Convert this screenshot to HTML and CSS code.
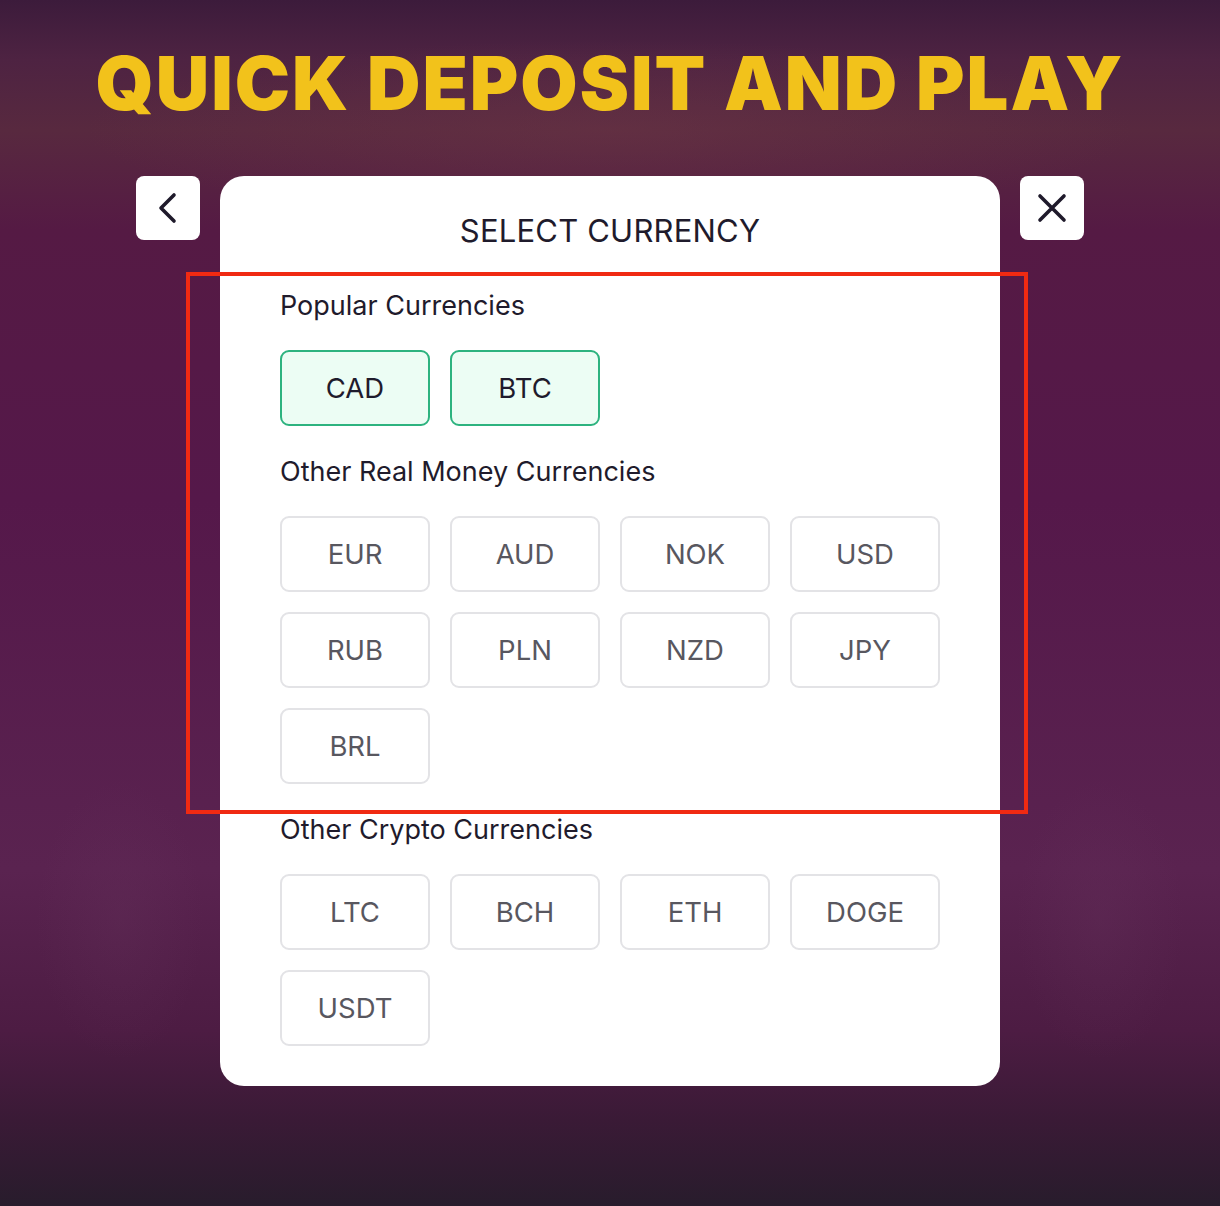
FILE: index.html
```html
<!DOCTYPE html>
<html>
<head>
<meta charset="utf-8">
<link rel="stylesheet" href="styles.css">
</head>
<body>
<div class="page">
  <h1 class="headline">QUICK DEPOSIT AND PLAY</h1>
  <div class="stage">
    <button class="icon-btn" aria-label="Back">
      <svg width="32" height="32" viewBox="0 0 32 32"><path d="M22 3 L9 16 L22 29" fill="none" stroke="#1f1a2b" stroke-width="3.6" stroke-linecap="round" stroke-linejoin="round"/></svg>
    </button>
    <div class="modal">
      <div class="modal-title">SELECT CURRENCY</div>
      <div class="section">
        <div class="section-title">Popular Currencies</div>
        <div class="grid">
          <div class="cur selected">CAD</div>
          <div class="cur selected">BTC</div>
        </div>
      </div>
      <div class="section">
        <div class="section-title">Other Real Money Currencies</div>
        <div class="grid">
          <div class="cur">EUR</div>
          <div class="cur">AUD</div>
          <div class="cur">NOK</div>
          <div class="cur">USD</div>
          <div class="cur">RUB</div>
          <div class="cur">PLN</div>
          <div class="cur">NZD</div>
          <div class="cur">JPY</div>
          <div class="cur">BRL</div>
        </div>
      </div>
      <div class="section">
        <div class="section-title">Other Crypto Currencies</div>
        <div class="grid">
          <div class="cur">LTC</div>
          <div class="cur">BCH</div>
          <div class="cur">ETH</div>
          <div class="cur">DOGE</div>
          <div class="cur">USDT</div>
        </div>
      </div>
    </div>
    <button class="icon-btn" aria-label="Close">
      <svg width="32" height="32" viewBox="0 0 32 32"><path d="M4 4 L28 28 M28 4 L4 28" fill="none" stroke="#1f1a2b" stroke-width="3.6" stroke-linecap="round"/></svg>
    </button>
  </div>
  <div class="highlight"></div>
</div>
</body>
</html>
```

FILE: styles.css
```css
html, body {
  margin: 0;
  padding: 0;
}
body {
  width: 1220px;
  height: 1206px;
  overflow: hidden;
  font-family: Inter, "Noto Sans", sans-serif;
  background:
    radial-gradient(ellipse 120px 200px at 1100px 920px, rgba(110, 60, 100, 0.18), rgba(110, 60, 100, 0) 70%),
    radial-gradient(ellipse 120px 200px at 120px 920px, rgba(110, 60, 100, 0.18), rgba(110, 60, 100, 0) 70%),
    radial-gradient(ellipse 700px 120px at 610px 130px, rgba(110, 55, 70, 0.45), rgba(110, 55, 70, 0) 75%),
    linear-gradient(180deg, #3c1b3b 0px, #4e2342 60px, #58293f 130px, #551a44 230px, #55184a 500px, #5a2350 870px, #4d1c43 1030px, #3a1a36 1120px, #281c2c 1206px);
}
.page {
  position: relative;
  width: 1220px;
  height: 1206px;
}
.headline {
  margin: 0;
  padding-top: 38px;
  line-height: 90px;
  height: 90px;
  text-align: center;
  color: #f2c21b;
  font-family: Inter, "DejaVu Sans", sans-serif;
  font-weight: 900;
  font-size: 74px;
  letter-spacing: 2px;
}
.stage {
  margin-top: 48px;
  display: flex;
  justify-content: center;
  align-items: flex-start;
  gap: 20px;
}
.icon-btn {
  width: 64px;
  height: 64px;
  border: none;
  border-radius: 8px;
  background: #ffffff;
  display: flex;
  align-items: center;
  justify-content: center;
  padding: 0;
}
.modal {
  width: 780px;
  box-sizing: border-box;
  background: #ffffff;
  border-radius: 24px;
  padding: 37px 60px 40px;
  height: 910px;
}
.modal-title {
  text-align: center;
  font-size: 31px;
  line-height: 36px;
  color: #1f1b2c;
  letter-spacing: 0.2px;
  margin-bottom: 42px;
}
.section-title {
  font-size: 27px;
  line-height: 30px;
  color: #1f1b2c;
  margin-bottom: 29px;
}
.section + .section {
  margin-top: 31px;
}
.grid {
  display: grid;
  grid-template-columns: repeat(4, 150px);
  gap: 20px;
}
.cur {
  height: 76px;
  box-sizing: border-box;
  border: 2px solid #e3e3e6;
  border-radius: 9px;
  display: flex;
  align-items: center;
  justify-content: center;
  font-size: 27.5px;
  color: #58575f;
  background: #ffffff;
}
.cur.selected {
  background: #ecfdf4;
  border-color: #2db37f;
  color: #1f1b2c;
}
.highlight {
  position: absolute;
  left: 186px;
  top: 272px;
  width: 842px;
  height: 542px;
  box-sizing: border-box;
  border: 4px solid #f02a12;
  pointer-events: none;
}
```
